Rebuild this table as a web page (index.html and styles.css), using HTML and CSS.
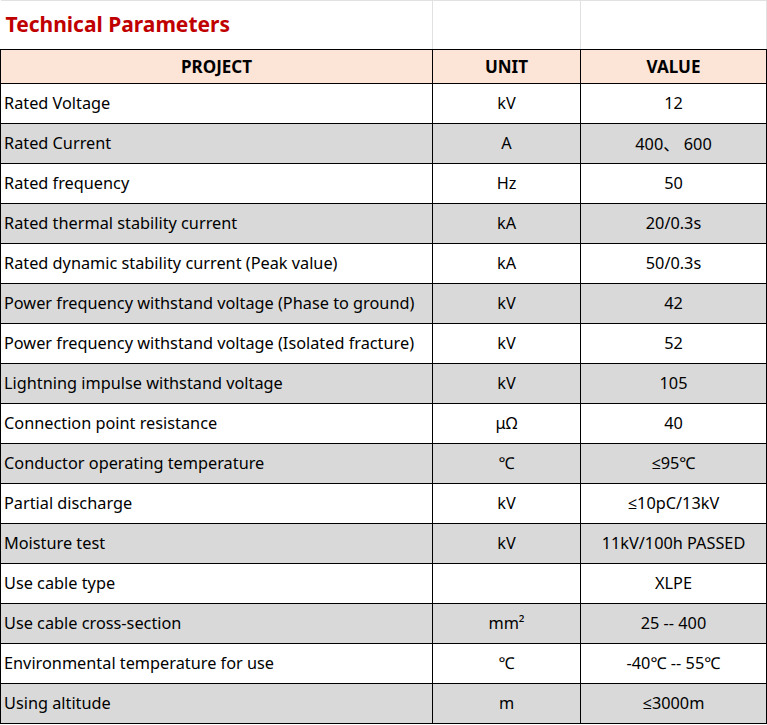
FILE: index.html
```html
<!DOCTYPE html>
<html>
<head>
<meta charset="utf-8">
<link rel="stylesheet" href="styles.css">
</head>
<body>
<table class="params">
  <colgroup>
    <col class="c-project">
    <col class="c-unit">
    <col class="c-value">
  </colgroup>
  <tr class="title-row">
    <td class="title">Technical Parameters</td>
    <td class="blank"></td>
    <td class="blank"></td>
  </tr>
  <tr class="head">
    <th>PROJECT</th><th>UNIT</th><th>VALUE</th>
  </tr>
  <tr><td>Rated Voltage</td><td>kV</td><td>12</td></tr>
  <tr class="alt"><td>Rated Current</td><td>A</td><td>400、 600</td></tr>
  <tr><td>Rated frequency</td><td>Hz</td><td>50</td></tr>
  <tr class="alt"><td>Rated thermal stability current</td><td>kA</td><td>20/0.3s</td></tr>
  <tr><td>Rated dynamic stability current (Peak value)</td><td>kA</td><td>50/0.3s</td></tr>
  <tr class="alt"><td>Power frequency withstand voltage (Phase to ground)</td><td>kV</td><td>42</td></tr>
  <tr><td>Power frequency withstand voltage (Isolated fracture)</td><td>kV</td><td>52</td></tr>
  <tr class="alt"><td>Lightning impulse withstand voltage</td><td>kV</td><td>105</td></tr>
  <tr><td>Connection point resistance</td><td>μΩ</td><td>40</td></tr>
  <tr class="alt"><td>Conductor operating temperature</td><td>℃</td><td>≤95℃</td></tr>
  <tr><td>Partial discharge</td><td>kV</td><td>≤10pC/13kV</td></tr>
  <tr class="alt"><td>Moisture test</td><td>kV</td><td>11kV/100h PASSED</td></tr>
  <tr><td>Use cable type</td><td></td><td>XLPE</td></tr>
  <tr class="alt"><td>Use cable cross-section</td><td>mm²</td><td>25 -- 400</td></tr>
  <tr><td>Environmental temperature for use</td><td>℃</td><td>-40℃ -- 55℃</td></tr>
  <tr class="alt"><td>Using altitude</td><td>m</td><td>≤3000m</td></tr>
</table>
</body>
</html>
```
FILE: styles.css
```css
html, body {
  margin: 0;
  padding: 0;
  background: #ffffff;
}
body {
  font-family: "Noto Sans", "Open Sans", "Noto Sans CJK SC", sans-serif;
  font-size: 16.3px;
  color: #000000;
}
.params {
  border-collapse: collapse;
  table-layout: fixed;
  width: 766px;
}
.c-project { width: 432px; }
.c-unit { width: 148px; }
.c-value { width: 186px; }
.params td, .params th {
  border: 1px solid #000000;
  height: 38px;
  padding: 0 0 1px 0;
  text-align: center;
  vertical-align: middle;
  white-space: nowrap;
  overflow: hidden;
}
.params td:first-child {
  text-align: left;
  padding-left: 3px;
}
.title-row td {
  border: 1px solid #e1e1e1;
  border-bottom: 1px solid #000000;
  height: 46px;
  padding: 0;
  background: #ffffff;
}
.title-row td.title {
  border-left: none;
  font-weight: 700;
  font-size: 21px;
  color: #c00000;
  padding-left: 5px;
  padding-bottom: 2px;
}
.head th {
  height: 33px;
  padding: 0;
  background: #fce4d6;
  font-weight: 700;
  font-size: 17px;
}
.alt td {
  background: #d9d9d9;
}
```
